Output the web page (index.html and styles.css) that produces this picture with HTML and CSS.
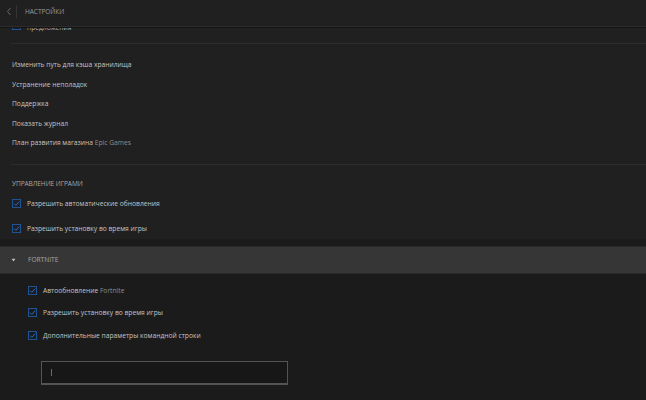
FILE: index.html
```html
<!DOCTYPE html>
<html lang="ru">
<head>
<meta charset="utf-8">
<title>Настройки</title>
<link rel="stylesheet" href="styles.css">
</head>
<body>
<div class="app">
  <header class="header">
    <span class="back">
      <svg width="6" height="9" viewBox="0 0 6 9"><path d="M4.5 1 L1.5 4.5 L4.5 8" fill="none" stroke="#6a6a6a" stroke-width="1"/></svg>
    </span>
    <span class="vsep"></span>
    <span class="title">НАСТРОЙКИ</span>
  </header>
  <main class="main">
    <div class="general">
      <div class="cut-row">
        <span class="cb"><svg viewBox="0 0 9 9"><path d="M2 4.6 L3.8 6.4 L7.2 2.6" fill="none" stroke="#2b6cc0" stroke-width="1"/></svg></span>
        <span class="label">предложения</span>
      </div>
      <div class="divider"></div>
      <ul class="links">
        <li>Изменить путь для кэша хранилища</li>
        <li>Устранение неполадок</li>
        <li>Поддержка</li>
        <li>Показать журнал</li>
        <li>План развития магазина <span class="dim">Epic Games</span></li>
      </ul>
      <div class="divider"></div>
      <h2 class="heading">УПРАВЛЕНИЕ ИГРАМИ</h2>
      <div class="check-list">
        <label class="check"><span class="cb"><svg viewBox="0 0 9 9"><path d="M2 4.6 L3.8 6.4 L7.2 2.6" fill="none" stroke="#2b6cc0" stroke-width="1"/></svg></span><span class="label">Разрешить автоматические обновления</span></label>
        <label class="check"><span class="cb"><svg viewBox="0 0 9 9"><path d="M2 4.6 L3.8 6.4 L7.2 2.6" fill="none" stroke="#2b6cc0" stroke-width="1"/></svg></span><span class="label">Разрешить установку во время игры</span></label>
      </div>
    </div>
    <section class="game">
      <div class="game-bar">
        <span class="caret">
          <svg width="5" height="4" viewBox="0 0 5 4"><path d="M0.5 0.8 L4.5 0.8 L2.5 3.4 Z" fill="#bdbdbd"/></svg>
        </span>
        <span class="game-name">FORTNITE</span>
      </div>
      <div class="game-body">
        <label class="check"><span class="cb"><svg viewBox="0 0 9 9"><path d="M2 4.6 L3.8 6.4 L7.2 2.6" fill="none" stroke="#2b6cc0" stroke-width="1"/></svg></span><span class="label">Автообновление <span class="dim">Fortnite</span></span></label>
        <label class="check"><span class="cb"><svg viewBox="0 0 9 9"><path d="M2 4.6 L3.8 6.4 L7.2 2.6" fill="none" stroke="#2b6cc0" stroke-width="1"/></svg></span><span class="label">Разрешить установку во время игры</span></label>
        <label class="check"><span class="cb"><svg viewBox="0 0 9 9"><path d="M2 4.6 L3.8 6.4 L7.2 2.6" fill="none" stroke="#2b6cc0" stroke-width="1"/></svg></span><span class="label">Дополнительные параметры командной строки</span></label>
        <div class="input"><span class="text-caret"></span></div>
      </div>
    </section>
  </main>
</div>
</body>
</html>
```

FILE: styles.css
```css
* { box-sizing: border-box; }
html, body { margin: 0; padding: 0; }
body {
  background: #1b1b1b;
  font-family: "Open Sans", "Noto Sans", sans-serif;
  color: #c4c4c4;
  font-size: 6.7px;
  width: 646px;
  height: 400px;
  overflow: hidden;
}
.app { display: flex; flex-direction: column; height: 400px; }
.header {
  height: 27px;
  flex: none;
  display: flex;
  align-items: center;
  background: #202020;
  border-bottom: 1px solid #2d2d2d;
  box-shadow: 0 1px 0 #141414;
  padding-bottom: 4px;
  position: relative;
  z-index: 2;
}
.back { width: 16px; display: flex; justify-content: center; padding-left: 1px; }
.back svg { display: block; }
.vsep { width: 1px; height: 13px; background: #343434; }
.title {
  margin-left: 8px;
  color: #9a9a9a;
  font-size: 6.6px;
  letter-spacing: -0.1px;
}
.main { flex: 1; overflow: hidden; display: flex; flex-direction: column; }
.general {
  background: #202020;
  padding: 0 0 6px 0;
}
.cut-row {
  display: flex;
  align-items: center;
  gap: 6px;
  height: 14px;
  margin-top: -7px;
  padding-left: 12px;
}
.cut-row .cb { margin-top: -4px; }
.cut-row .label { color: #b0b0b0; }
.divider { height: 1px; background: #2c2c2c; margin-left: 11px; }
.cut-row + .divider { margin-top: 9px; }
.links {
  list-style: none;
  margin: 0;
  padding: 11px 0 11px 12px;
  display: flex;
  flex-direction: column;
}
.links li { height: 19.5px; line-height: 19.5px; }
.dim { color: #8e8e8e; }
.heading {
  margin: 0;
  font-weight: normal;
  font-size: 6.6px;
  color: #a8a8a8;
  padding: 14px 0 0 12px;
  height: 34px;
  letter-spacing: -0.1px;
}
.check-list { display: flex; flex-direction: column; padding-left: 12px; gap: 16px; }
.check { display: flex; align-items: center; gap: 6px; height: 9px; }
.cb {
  width: 9px;
  height: 9px;
  border: 1px solid #1e5396;
  display: block;
  flex: none;
  position: relative;
}
.cb svg { position: absolute; left: -1px; top: -1px; width: 9px; height: 9px; }
.game { flex: 1; display: flex; flex-direction: column; margin-top: 7px; }
.game-bar {
  height: 28px;
  background: #363636;
  border-top: 1px solid #2a2a2a;
  border-bottom: 1px solid #2a2a2a;
  display: flex;
  align-items: center;
}
.caret { width: 28px; display: flex; justify-content: center; padding-right: 1px; }
.caret svg { display: block; }
.game-name { color: #a8a8a8; font-size: 6.6px; }
.game-body {
  flex: 1;
  background: #1b1b1b;
  padding: 12px 0 0 28px;
  display: flex;
  flex-direction: column;
  gap: 13.5px;
}
.input {
  margin-top: 8px;
  margin-left: 13px;
  width: 247px;
  height: 24px;
  border: 1px solid #545454;
  border-bottom-width: 2px;
  background: #171717;
  position: relative;
}
.text-caret {
  position: absolute;
  left: 9px;
  top: 7px;
  width: 1px;
  height: 7px;
  background: #6a6a6a;
}
```
